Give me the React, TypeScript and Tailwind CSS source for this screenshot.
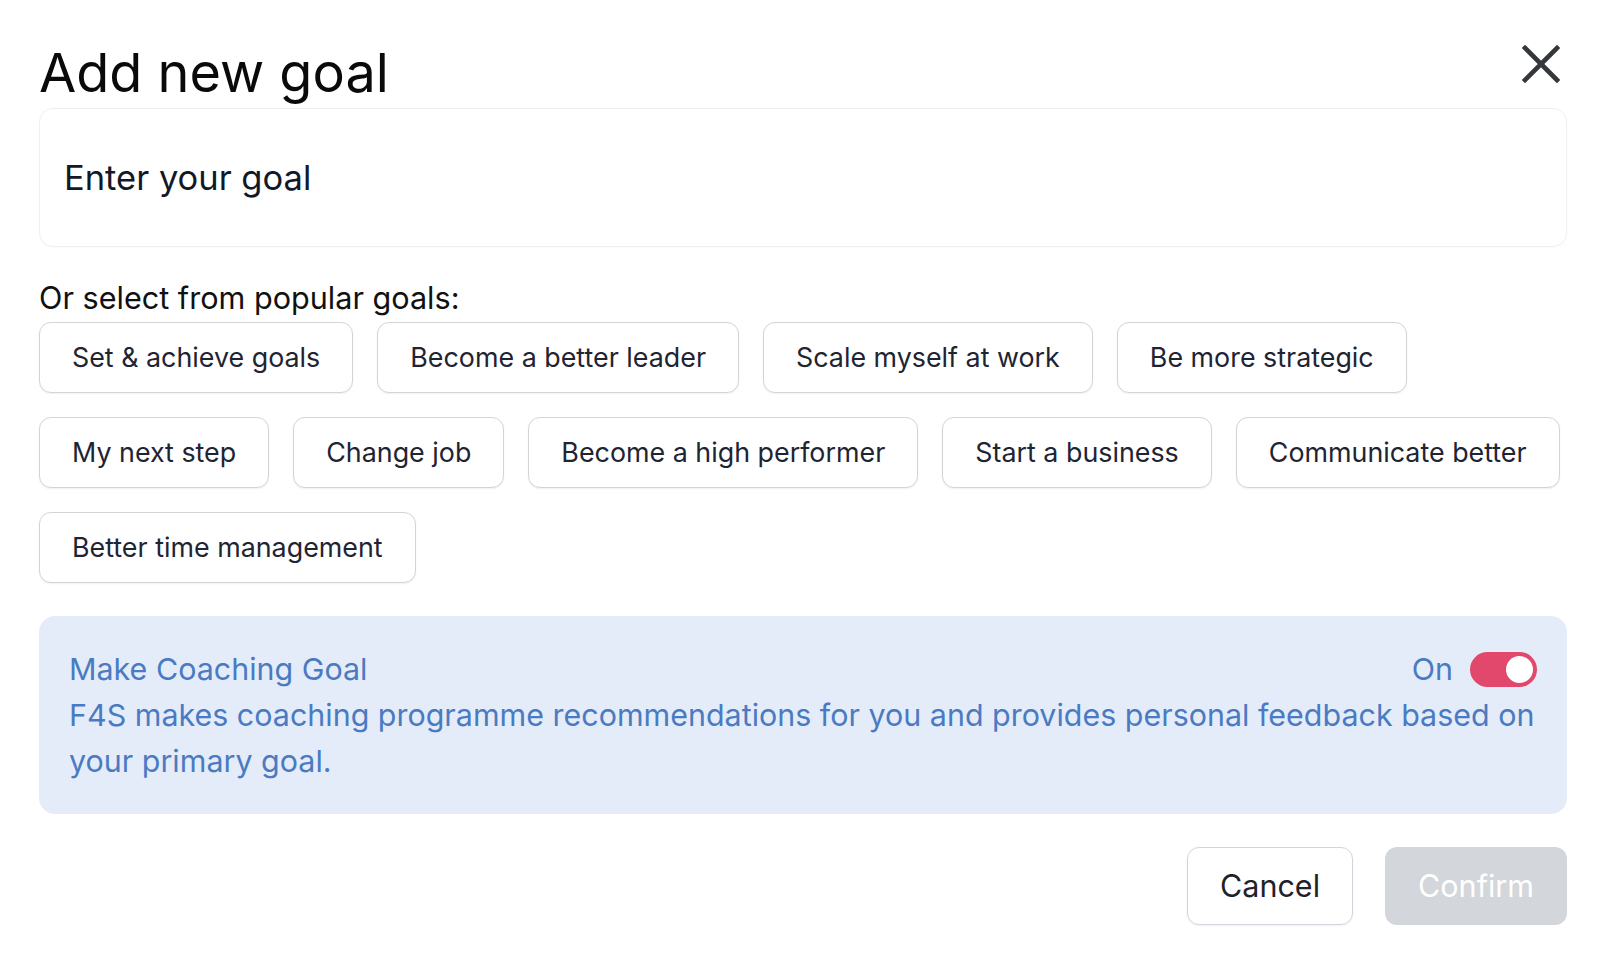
import React from "react";

const goals = [
  "Set & achieve goals",
  "Become a better leader",
  "Scale myself at work",
  "Be more strategic",
  "My next step",
  "Change job",
  "Become a high performer",
  "Start a business",
  "Communicate better",
  "Better time management",
];

export default function App() {
  return (
    <div className="min-h-[956px] w-full bg-white pl-[39px] pr-[33px] pt-[45px] font-['Inter',sans-serif] text-black">
      <div className="flex items-start justify-between">
        <h1 className="text-[54px] leading-[56px] font-normal text-[#0a0a0a]">Add new goal</h1>
        <button className="mr-[7px] h-[38px] w-[38px]" aria-label="Close">
          <svg viewBox="0 0 38 38" width="38" height="38">
            <path d="M3 3 L35 35 M35 3 L3 35" stroke="#34373c" strokeWidth="4.6" strokeLinecap="square" fill="none" />
          </svg>
        </button>
      </div>

      <div className="mt-[7px] flex h-[139px] items-center rounded-[14px] border border-[#efefef] px-[24px] shadow-[0_1px_2px_rgba(0,0,0,0.02)]">
        <input
          className="w-full bg-transparent text-[34.5px] text-[#111827] outline-none placeholder:text-[#111827]"
          placeholder="Enter your goal"
        />
      </div>

      <div className="mt-[33px] text-[30.6px] leading-[36px] text-[#111111]">Or select from popular goals:</div>

      <div className="mt-[6px] flex flex-wrap gap-[24px]">
        {goals.map((g) => (
          <button
            key={g}
            className="flex h-[71px] items-center rounded-[12px] border border-[#d4d4d8] bg-white px-[32px] text-[26.85px] text-[#1f2433] shadow-[0_1px_2px_rgba(0,0,0,0.06)]"
          >
            {g}
          </button>
        ))}
      </div>

      <div className="mt-[33px] rounded-[16px] bg-[#e5ecf9] pl-[30px] pr-[16px] pt-[30px] pb-[30px] text-[30.45px] leading-[46px] text-[#4a7bc2]">
        <div className="flex items-center justify-between pr-[14px]">
          <span>Make Coaching Goal</span>
          <div className="flex items-center gap-[17px]">
            <span>On</span>
            <div className="flex h-[35px] w-[67px] items-center justify-end rounded-full bg-[#e2486b] pr-[4px]">
              <div className="h-[27px] w-[27px] rounded-full bg-white" />
            </div>
          </div>
        </div>
        <p>
          F4S makes coaching programme recommendations for you and provides personal feedback based on your primary goal.
        </p>
      </div>

      <div className="mt-[33px] flex justify-end gap-[32px]">
        <button className="h-[78px] rounded-[12px] border border-[#d1d5db] bg-white px-[32px] text-[30.5px] text-[#1f2329] shadow-[0_1px_2px_rgba(0,0,0,0.05)]">
          Cancel
        </button>
        <button className="h-[78px] rounded-[12px] bg-[#d3d6da] px-[33px] text-[30.5px] text-white">
          Confirm
        </button>
      </div>
    </div>
  );
}
